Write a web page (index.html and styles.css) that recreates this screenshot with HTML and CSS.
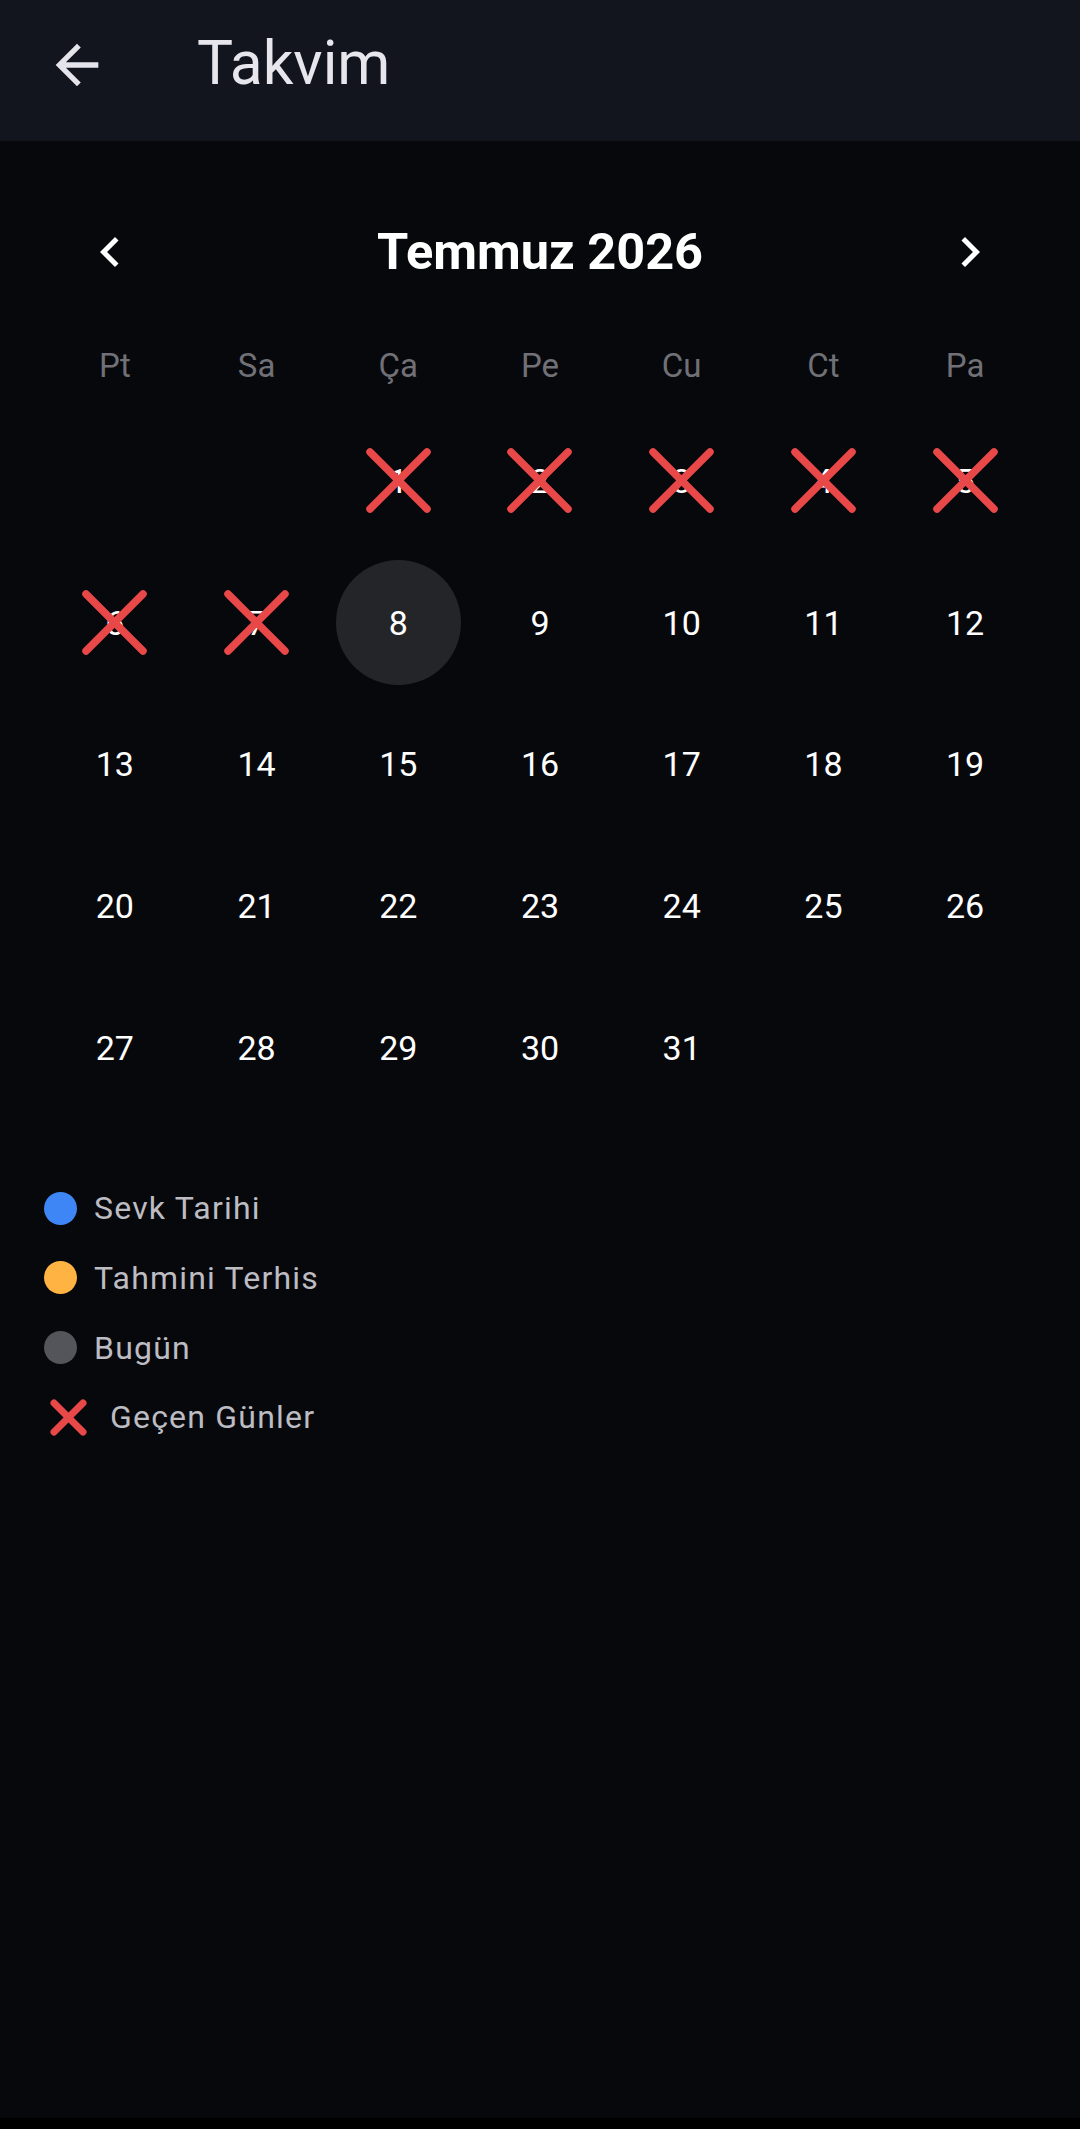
FILE: index.html
```html
<!DOCTYPE html>
<html lang="tr">
<head>
<meta charset="utf-8">
<title>Takvim</title>
<link rel="stylesheet" href="styles.css">
</head>
<body>
<div class="app">
  <header class="appbar">
    <button class="back" aria-label="Geri">
      <svg viewBox="0 0 24 24" width="64" height="64"><path fill="#e4e4ea" d="M20 11H7.83l5.59-5.59L12 4l-8 8 8 8 1.41-1.41L7.83 13H20v-2z"/></svg>
    </button>
    <h1 class="title">Takvim</h1>
  </header>

  <main class="content">
    <div class="monthnav">
      <button class="navbtn" aria-label="Önceki ay">
        <svg viewBox="0 0 24 24" width="60" height="60"><path fill="#ffffff" d="M15.41 7.41L14 6l-6 6 6 6 1.41-1.41L10.83 12z"/></svg>
      </button>
      <div class="month">Temmuz 2026</div>
      <button class="navbtn" aria-label="Sonraki ay">
        <svg viewBox="0 0 24 24" width="60" height="60"><path fill="#ffffff" d="M10 6L8.59 7.41 13.170 12l-4.58 4.59L10 18l6-6z"/></svg>
      </button>
    </div>

    <div class="weekdays">
      <span>Pt</span><span>Sa</span><span>Ça</span><span>Pe</span><span>Cu</span><span>Ct</span><span>Pa</span>
    </div>

    <div class="days">
      <div class="day"></div>
      <div class="day"></div>
      <div class="day past"><span>1</span><svg class="cross" viewBox="0 0 67 67"><path d="M5 5L62 62M62 5L5 62"/></svg></div>
      <div class="day past"><span>2</span><svg class="cross" viewBox="0 0 67 67"><path d="M5 5L62 62M62 5L5 62"/></svg></div>
      <div class="day past"><span>3</span><svg class="cross" viewBox="0 0 67 67"><path d="M5 5L62 62M62 5L5 62"/></svg></div>
      <div class="day past"><span>4</span><svg class="cross" viewBox="0 0 67 67"><path d="M5 5L62 62M62 5L5 62"/></svg></div>
      <div class="day past"><span>5</span><svg class="cross" viewBox="0 0 67 67"><path d="M5 5L62 62M62 5L5 62"/></svg></div>
      <div class="day past"><span>6</span><svg class="cross" viewBox="0 0 67 67"><path d="M5 5L62 62M62 5L5 62"/></svg></div>
      <div class="day past"><span>7</span><svg class="cross" viewBox="0 0 67 67"><path d="M5 5L62 62M62 5L5 62"/></svg></div>
      <div class="day today"><span>8</span></div>
      <div class="day"><span>9</span></div>
      <div class="day"><span>10</span></div>
      <div class="day"><span>11</span></div>
      <div class="day"><span>12</span></div>
      <div class="day"><span>13</span></div>
      <div class="day"><span>14</span></div>
      <div class="day"><span>15</span></div>
      <div class="day"><span>16</span></div>
      <div class="day"><span>17</span></div>
      <div class="day"><span>18</span></div>
      <div class="day"><span>19</span></div>
      <div class="day"><span>20</span></div>
      <div class="day"><span>21</span></div>
      <div class="day"><span>22</span></div>
      <div class="day"><span>23</span></div>
      <div class="day"><span>24</span></div>
      <div class="day"><span>25</span></div>
      <div class="day"><span>26</span></div>
      <div class="day"><span>27</span></div>
      <div class="day"><span>28</span></div>
      <div class="day"><span>29</span></div>
      <div class="day"><span>30</span></div>
      <div class="day"><span>31</span></div>
    </div>

    <ul class="legend">
      <li><span class="dot dot-blue"></span><span class="label">Sevk Tarihi</span></li>
      <li><span class="dot dot-orange"></span><span class="label">Tahmini Terhis</span></li>
      <li><span class="dot dot-gray"></span><span class="label">Bugün</span></li>
      <li class="legend-x"><svg class="xicon" viewBox="0 0 37 37"><path d="M4 4L33 33M33 4L4 33"/></svg><span class="label">Geçen Günler</span></li>
    </ul>
  </main>
  <div class="sysbar"></div>
</div>
</body>
</html>
```

FILE: styles.css
```css
* { box-sizing: border-box; }

html, body {
  margin: 0;
  padding: 0;
  background: #07080c;
}

body {
  font-family: Roboto, "Noto Sans", "Liberation Sans", sans-serif;
  color: #ffffff;
}

.app {
  min-height: 100vh;
  display: flex;
  flex-direction: column;
}

button {
  background: none;
  border: 0;
  padding: 0;
  margin: 0;
  cursor: pointer;
  display: flex;
  align-items: center;
  justify-content: center;
}

.appbar {
  height: 141px;
  background: #12151d;
  display: flex;
  align-items: center;
  padding-left: 45px;
  padding-bottom: 12px;
}

.back {
  width: 64px;
  height: 64px;
}

.title {
  margin: 0 0 0 88px;
  font-size: 60.5px;
  font-weight: 400;
  color: #e6e6ec;
  line-height: 1;
}

.content {
  flex: 1;
  padding: 71px 44px 0;
}

.monthnav {
  height: 80px;
  display: flex;
  align-items: center;
  justify-content: space-between;
  padding: 0 36px 0 36px;
}

.navbtn {
  width: 60px;
  height: 60px;
}

.month {
  font-size: 50.5px;
  font-weight: 700;
  color: #ffffff;
  line-height: 1;
}

.weekdays {
  margin-top: 48px;
  height: 50px;
  display: grid;
  grid-template-columns: repeat(7, 1fr);
  align-items: center;
  justify-items: center;
  font-size: 33px;
  color: #707076;
}

.days {
  margin-top: 20px;
  display: grid;
  grid-template-columns: repeat(7, 1fr);
  grid-auto-rows: 141.7px;
}

.day {
  position: relative;
  display: flex;
  align-items: center;
  justify-content: center;
  font-size: 34px;
  color: #ffffff;
}

.day.today span {
  width: 125px;
  height: 125px;
  border-radius: 50%;
  background: #242529;
  display: flex;
  align-items: center;
  justify-content: center;
}

.cross {
  position: absolute;
  left: 50%;
  top: 50%;
  width: 67px;
  height: 67px;
  margin: -33.5px 0 0 -33.5px;
}

.cross path,
.xicon path {
  stroke: #e84848;
  stroke-width: 7.5;
  stroke-linecap: round;
  fill: none;
}

.legend {
  list-style: none;
  margin: 55px 0 0;
  padding: 0;
}

.legend li {
  height: 69.7px;
  display: flex;
  align-items: center;
}

.dot {
  width: 33px;
  height: 33px;
  border-radius: 50%;
  margin-right: 17px;
  flex: none;
}

.dot-blue { background: #3e86f6; }
.dot-orange { background: #ffb342; }
.dot-gray { background: #54555b; }

.label {
  font-size: 32px;
  letter-spacing: 1.2px;
  color: #bcbcc2;
}

.legend-x .xicon {
  width: 37px;
  height: 37px;
  margin-left: 6px;
  margin-right: 23px;
  flex: none;
}

.legend-x .xicon path {
  stroke-width: 7;
}

.sysbar {
  height: 11px;
  background: #000000;
}
```
